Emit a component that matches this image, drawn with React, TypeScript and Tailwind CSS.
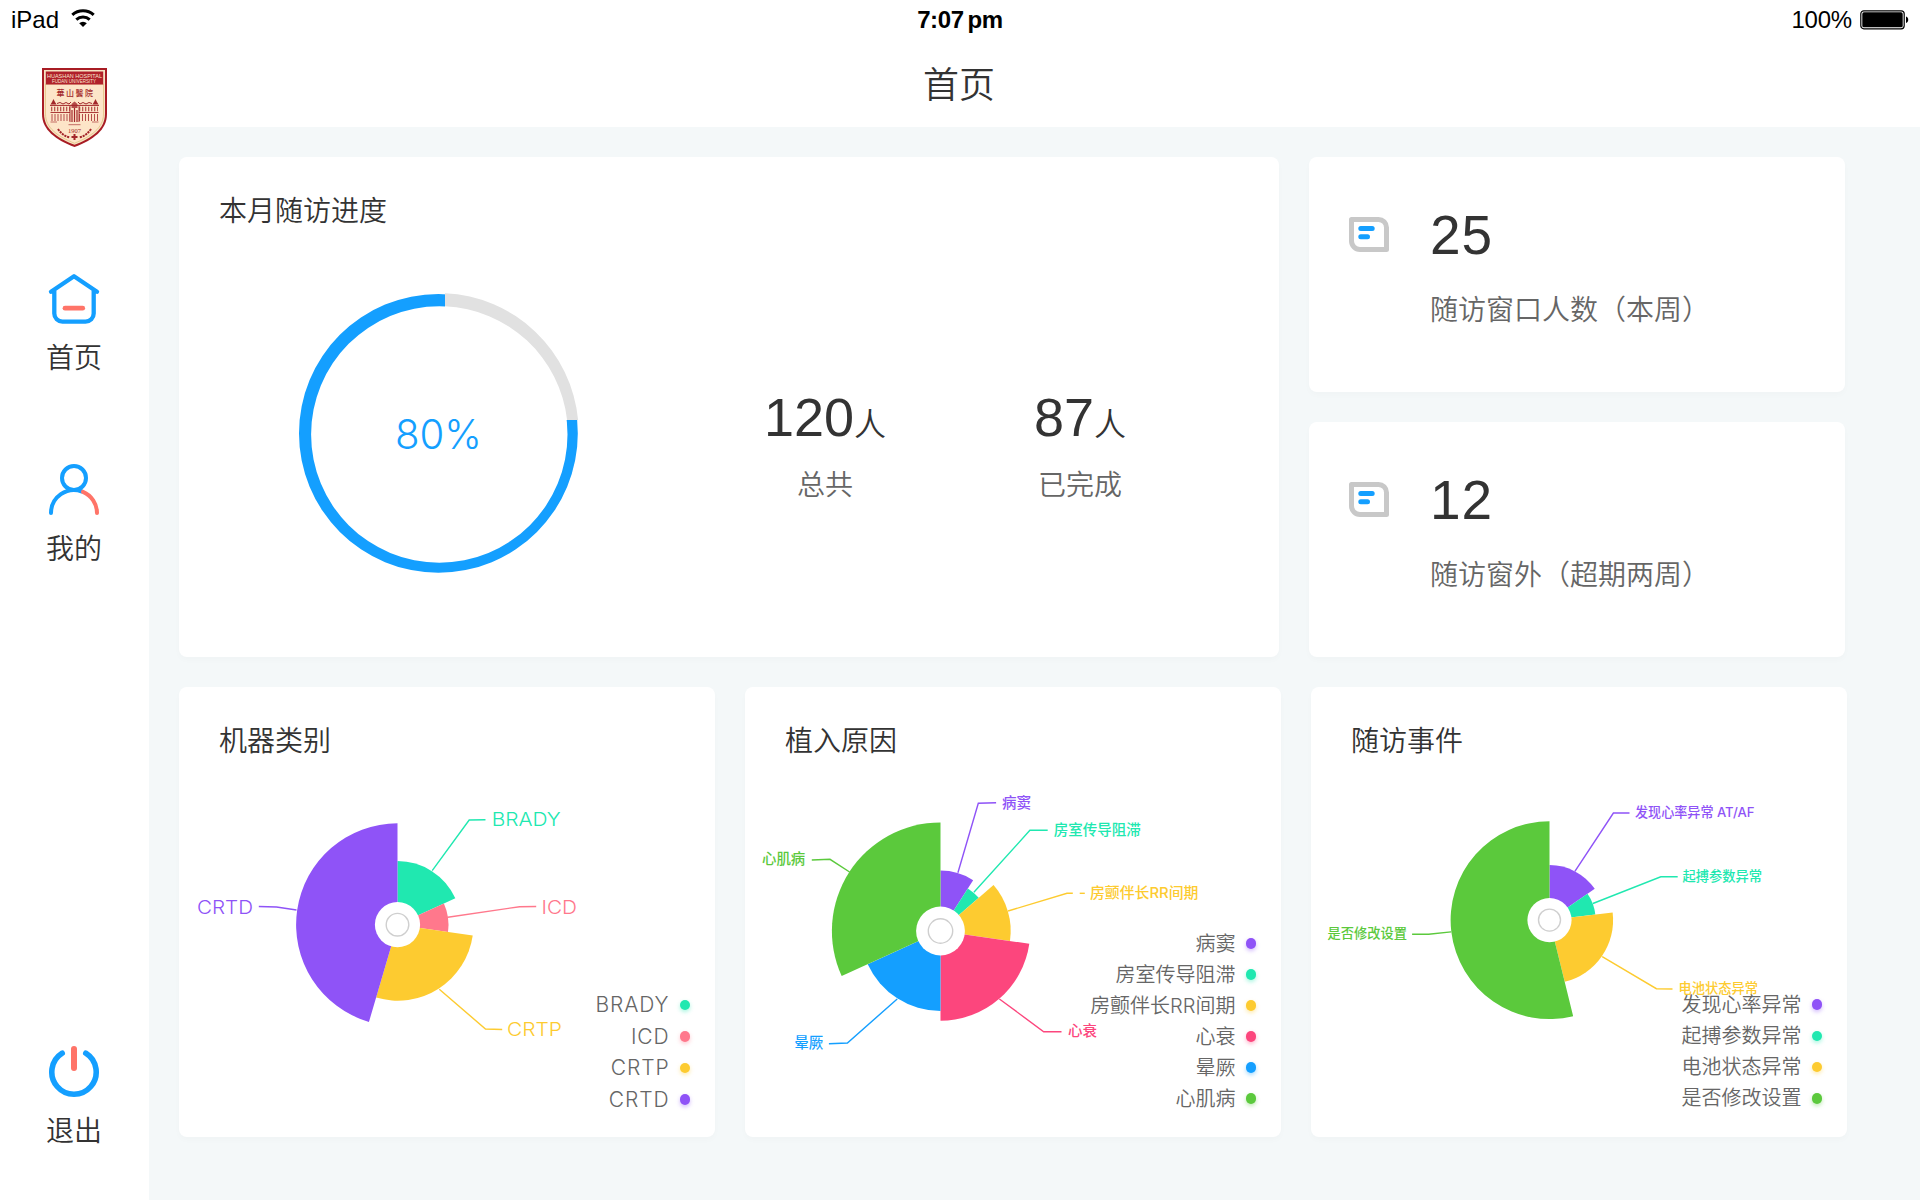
import type { ReactNode } from 'react';

const BLUE = '#149fff';
const RED = '#ff7468';
const PURPLE = '#8f53f7';
const TEAL = '#20e8b0';
const YELLOW = '#fdcb30';
const ROSE = '#ff788c';
const PINK = '#fc467d';
const GREEN = '#5bc93c';

type Slice = { color: string; from: number; to: number; r: number };
type Callout = {
  text: string;
  color: string;
  line: string;
  dash?: string;
  x: number;
  cy: number;
  width: number;
};
type LegendItem = { text: string; color: string };

function point(cx: number, cy: number, r: number, turn: number) {
  const a = turn * 2 * Math.PI;
  return `${(cx + r * Math.sin(a)).toFixed(2)} ${(cy - r * Math.cos(a)).toFixed(2)}`;
}

function wedge(cx: number, cy: number, s: Slice) {
  const large = s.to - s.from > 0.5 ? 1 : 0;
  return `M${cx} ${cy}L${point(cx, cy, s.r, s.from)}A${s.r} ${s.r} 0 ${large} 1 ${point(cx, cy, s.r, s.to)}Z`;
}

function RoseChart(props: {
  cx: number;
  cy: number;
  hole: number;
  ring: number;
  slices: Slice[];
  callouts: Callout[];
  fontSize: number;
  weight: number;
}) {
  const { cx, cy, hole, ring, slices, callouts, fontSize, weight } = props;
  return (
    <svg className="absolute inset-0" width="536" height="450" viewBox="0 0 536 450" fill="none">
      {slices.map((s, i) => (
        <path key={i} d={wedge(cx, cy, s)} fill={s.color} />
      ))}
      <circle cx={cx} cy={cy} r={hole} fill="#fff" />
      <circle cx={cx} cy={cy} r={ring} stroke="#cfcfcf" strokeWidth="1.4" />
      {callouts.map((c) => (
        <g key={c.text}>
          <path d={c.line} stroke={c.color} strokeWidth="1.4" />
          {c.dash && <path d={c.dash} stroke={c.color} strokeWidth="1.4" />}
          <text
            x={c.x}
            y={c.cy + fontSize * 0.37}
            fill={c.color}
            fontSize={fontSize}
            fontWeight={weight}
            textLength={c.width}
            lengthAdjust="spacingAndGlyphs"
          >
            {c.text}
          </text>
        </g>
      ))}
    </svg>
  );
}

function Card({ className, children }: { className: string; children: ReactNode }) {
  return (
    <section className={`relative rounded-lg bg-white shadow-[0_3px_6px_rgba(0,0,0,0.02)] ${className}`}>
      {children}
    </section>
  );
}

function ChartCard(props: { title: string; legend: LegendItem[]; className: string; children: ReactNode }) {
  return (
    <Card className="flex h-[450px] w-[536px] flex-col justify-between">
      {props.children}
      <h2 className="relative pl-10 pt-[38px] text-[28px] font-[350] leading-8 text-[#333]">{props.title}</h2>
      <ul className={`relative flex flex-col items-end pr-[25px] font-[350] leading-none text-[#666] ${props.className}`}>
        {props.legend.map((l) => (
          <li key={l.text} className="flex flex-1 items-center gap-[10px]">
            <span>{l.text}</span>
            <span
              className="size-[10.5px] rounded-full"
              style={{ backgroundColor: l.color, boxShadow: `0 2px 4px ${l.color}66` }}
            />
          </li>
        ))}
      </ul>
    </Card>
  );
}

function Logo() {
  return (
    <svg width="65" height="80" viewBox="0 0 65 80" fill="none" className="ml-px">
      <path d="M0 0H65V46C65 62 51 72 32.500 79C14 72 0 62 0 46Z" fill="#a81c24" />
      <path d="M2 2H63V46C63 61 50 70 32.500 76.800C15 70 2 61 2 46Z" fill="#f6e3c3" />
      <path d="M3.500 16H61.500V46C61.500 60 49 68.500 32.500 75.200C16 68.500 3.500 60 3.500 46Z" fill="#fde5c8" stroke="#e0bd78" strokeWidth=".7" />
      <path d="M3.800 3.500H61.200V16.500H3.800Z" fill="#b0212a" />
      <g fill="#fbe6d0" fontFamily="Liberation Sans">
        <text x="5" y="9.900" fontSize="6" textLength="55" lengthAdjust="spacingAndGlyphs">HUASHAN HOSPITAL</text>
        <text x="10" y="15.200" fontSize="5" textLength="44" lengthAdjust="spacingAndGlyphs">FUDAN UNIVERSITY</text>
      </g>
      <g fill="#a3272a">
        <text x="14.500" y="28" fontSize="8" fontWeight="500" textLength="36.500">華山醫院</text>
        <text x="26" y="64.500" fontSize="5.500" fontFamily="Liberation Serif" textLength="13" lengthAdjust="spacingAndGlyphs">1907</text>
        <path d="M8.500 36.500L10 34L11.500 31L13 34L14.500 36.500ZM50.500 36.500L52 34L53.500 31L55 34L56.500 36.500Z" />
        <path d="M31.500 66H33.500V68H35.500V70H33.500V72H31.500V70H29.500V68H31.500Z" />
        <path d="M29.500 36L32.500 33.500L35.500 36V40H29.500Z" opacity=".8" />
      </g>
      <g stroke="#a3272a">
        <path d="M8 37.400H57M15 35.500L18 34.500L21 36L24 34.500L27 36L29 34M36 34L38 36L41 34.500L44 36L47 34.500L50 35.500" strokeWidth="1" />
        <path d="M9 41H28M37 41H56" strokeWidth="4.500" strokeDasharray="1.300 1.700" opacity=".75" />
        <path d="M8.500 44.500H28M37 44.500H56.500M28 38V54M37 38V54" strokeWidth=".9" />
        <path d="M9.500 49.500H28M37 49.500H56" strokeWidth="7" strokeDasharray="1 2" opacity=".8" />
        <path d="M30 42V54M32.500 40V54M35 42V54" strokeWidth="1.200" />
        <path d="M8.500 54H15M50 54H56.500M26.500 56.700H38.500" strokeWidth=".9" opacity=".7" />
        <path d="M16 61C19 65.500 23 68.500 28 69.500M49 61C46 65.500 42 68.500 37 69.500" strokeWidth="2" strokeDasharray="2.200 .8" />
      </g>
    </svg>
  );
}

function HomeIcon() {
  return (
    <svg width="52" height="52" viewBox="48 273 52 52" fill="none" strokeLinecap="round" strokeLinejoin="round">
      <path d="M51 291.700L74 276.200L97 291.700M54.300 291V313.500a8.200 8.200 0 0 0 8.200 8.200H85.500a8.200 8.200 0 0 0 8.200-8.200V291" stroke={BLUE} strokeWidth="4.300" />
      <path d="M65 308.200H82.700" stroke={RED} strokeWidth="4.800" />
    </svg>
  );
}

function UserIcon() {
  return (
    <svg width="52" height="53" viewBox="48 463 52 53" fill="none" strokeLinecap="round">
      <circle cx="74" cy="478" r="12" stroke={BLUE} strokeWidth="4" />
      <path d="M51 513A23 23 0 0 1 82 491.500" stroke={BLUE} strokeWidth="4" />
      <path d="M83 491.800A23 23 0 0 1 97 513" stroke={RED} strokeWidth="4" />
    </svg>
  );
}

function PowerIcon() {
  return (
    <svg width="52" height="53" viewBox="48 1045 52 53" fill="none" strokeLinecap="round">
      <path d="M62.200 1053.200A22.200 22.200 0 1 0 85.800 1053.200" stroke={BLUE} strokeWidth="5.600" />
      <path d="M74 1049V1068" stroke={RED} strokeWidth="6" />
    </svg>
  );
}

function NoteIcon() {
  return (
    <svg width="40" height="35" viewBox="0 0 40 35" fill="none">
      <path d="M2.500 2.500H29.500a8 8 0 0 1 8 8V32.500H11a8.500 8.500 0 0 1-8.500-8.500Z" stroke="#c8c8c8" strokeWidth="5" strokeLinejoin="round" />
      <path d="M11.800 11.500H23.200M11.800 19.700H18.500" stroke={BLUE} strokeWidth="5" strokeLinecap="round" />
    </svg>
  );
}

function NavItem({ label, icon, className }: { label: string; icon: ReactNode; className: string }) {
  return (
    <a className={`flex w-full flex-col items-center ${className}`}>
      {icon}
      <span className="mt-[17px] text-[28px] font-[350] leading-8 text-[#333]">{label}</span>
    </a>
  );
}

function StatusBar() {
  return (
    <div className="grid h-10 grid-cols-3 items-center font-['Liberation_Sans'] text-[24px] leading-none text-black">
      <div className="flex items-center gap-[12px] pl-[11px]">
        <span>iPad</span>
        <svg width="24" height="19" viewBox="0 0 24 19" fill="none" className="-mt-1">
          <path d="M1.300 5.800A16 16 0 0 1 22.700 5.800" stroke="#000" strokeWidth="3" />
          <path d="M5.300 10.600A10 10 0 0 1 18.700 10.600" stroke="#000" strokeWidth="3" />
          <path d="M12 18L8.200 14.200A5.500 5.500 0 0 1 15.800 14.200Z" fill="#000" />
        </svg>
      </div>
      <div className="text-center text-[24px] font-bold tracking-[-0.4px]">
        7:07<span className="ml-1">pm</span>
      </div>
      <div className="flex items-center justify-end gap-2 pr-[11px]">
        <span className="tracking-[-0.2px]">100%</span>
        <svg width="49" height="20" viewBox="0 0 49 20" fill="none">
          <rect x=".8" y=".8" width="43.400" height="18" rx="3" stroke="#000" strokeWidth="1.200" />
          <rect x="2.300" y="2.300" width="40.400" height="15" rx="1.600" fill="#000" />
          <path d="M46 6.500C49 7.500 49 12 46 13Z" fill="#000" />
        </svg>
      </div>
    </div>
  );
}

function ProgressRing() {
  return (
    <svg width="282" height="282" viewBox="297 292 282 282" className="block">
      <path
        fillRule="evenodd"
        fill={BLUE}
        d="M299 433.400a139.400 139.400 0 1 0 278.800 0a139.400 139.400 0 1 0-278.800 0ZM311.100 434.500a128.200 128.200 0 1 0 256.400 0a128.200 128.200 0 1 0-256.400 0Z"
      />
      <path d="M445 292H579V420H567.500L445 430Z" fill="#fff" />
      <path d="M445 293.200A140 140 0 0 1 578.100 420H567.100A128.400 128.400 0 0 0 445 306.300Z" fill="#e1e1e1" />
      <text x="395" y="448.600" fontSize="40.500" fontWeight="300" fill={BLUE} textLength="87" lengthAdjust="spacingAndGlyphs" fontFamily="Inter">
        80%
      </text>
    </svg>
  );
}

function Stat({ value, label }: { value: string; label: string }) {
  return (
    <div className="flex w-[140px] flex-col items-center">
      <div className="flex items-baseline leading-none text-[#333]">
        <span className="font-['Liberation_Sans'] text-[54px]">{value}</span>
        <span className="text-[32px] font-[350]">人</span>
      </div>
      <span className="mt-[25px] text-[28px] font-[350] leading-8 text-[#666]">{label}</span>
    </div>
  );
}

function WindowCard({ value, label }: { value: string; label: string }) {
  return (
    <Card className="flex h-[235px] w-[536px] items-start gap-[41px] pl-10 pt-[60px]">
      <NoteIcon />
      <div className="-mt-[14px] flex flex-col">
        <span className="font-['Liberation_Sans'] text-[55px] leading-[64px] tracking-[1px] text-[#333]">{value}</span>
        <span className="mt-[27px] text-[28px] font-[350] leading-8 text-[#666]">{label}</span>
      </div>
    </Card>
  );
}

export default function App() {
  return (
    <div className="flex h-[1200px] w-[1920px] flex-col overflow-hidden bg-white font-['Inter','Noto_Sans_CJK_SC',sans-serif]">
      <StatusBar />
      <div className="flex flex-1">
        <nav className="flex w-[149px] flex-col items-center pr-px pt-7">
          <Logo />
          <NavItem className="mt-[125px]" label="首页" icon={<HomeIcon />} />
          <NavItem className="mt-[89px]" label="我的" icon={<UserIcon />} />
          <NavItem className="mt-[480px]" label="退出" icon={<PowerIcon />} />
        </nav>
        <main className="flex flex-1 flex-col">
          <header className="h-[87px] pl-[774px] pt-[23px] text-[36px] leading-[44px] text-[#333]">
            <h1 className="font-[350]">首页</h1>
          </header>
          <div className="flex flex-1 flex-col gap-[30px] bg-[#f4f8f9] pl-[30px] pt-[30px]">
            <div className="flex gap-[30px]">
              <Card className="h-[500px] w-[1100px] pl-10 pt-[38px]">
                <h2 className="text-[28px] font-[350] leading-8 text-[#333]">本月随访进度</h2>
                <div className="flex pl-[78px] pt-[65px]">
                  <ProgressRing />
                  <div className="flex gap-[115px] pl-[176px] pt-[98px]">
                    <Stat value="120" label="总共" />
                    <Stat value="87" label="已完成" />
                  </div>
                </div>
              </Card>
              <div className="flex flex-col gap-[30px]">
                <WindowCard value="25" label="随访窗口人数（本周）" />
                <WindowCard value="12" label="随访窗外（超期两周）" />
              </div>
            </div>
            <div className="flex gap-[30px]">
              <ChartCard
                className="mb-[22px] h-[126px] text-[21px] tracking-[0.9px]"
                title="机器类别"
                legend={[
                  { text: 'BRADY', color: TEAL },
                  { text: 'ICD', color: ROSE },
                  { text: 'CRTP', color: YELLOW },
                  { text: 'CRTD', color: PURPLE },
                ]}
              >
                <RoseChart
                  cx={218.5}
                  cy={237.7}
                  hole={22.6}
                  ring={11.3}
                  fontSize={19}
                  weight={300}
                  slices={[
                    { color: TEAL, from: 0, to: 2 / 11, r: 63.6 },
                    { color: ROSE, from: 2 / 11, to: 3 / 11, r: 51 },
                    { color: YELLOW, from: 3 / 11, to: 6 / 11, r: 76 },
                    { color: PURPLE, from: 6 / 11, to: 1, r: 101.4 },
                  ]}
                  callouts={[
                    { text: 'BRADY', color: TEAL, line: 'M253.200 183.700L290.200 133L306.500 132.700', x: 312.7, cy: 132, width: 69 },
                    { text: 'ICD', color: ROSE, line: 'M268.800 230.300L340.600 219.700L357.200 219.500', x: 362.5, cy: 219.7, width: 35.5 },
                    { text: 'CRTP', color: YELLOW, line: 'M260.300 302.300L306.500 342L323.200 342.500', x: 328, cy: 342, width: 55 },
                    { text: 'CRTD', color: PURPLE, line: 'M117.500 223L97.500 220L79.800 219.500', x: 18, cy: 220, width: 56 },
                  ]}
                />
              </ChartCard>
              <ChartCard
                className="mb-[23px] h-[186px] text-[20px]"
                title="植入原因"
                legend={[
                  { text: '病窦', color: PURPLE },
                  { text: '房室传导阻滞', color: TEAL },
                  { text: '房颤伴长RR间期', color: YELLOW },
                  { text: '心衰', color: PINK },
                  { text: '晕厥', color: BLUE },
                  { text: '心肌病', color: GREEN },
                ]}
              >
                <RoseChart
                  cx={195.5}
                  cy={244}
                  hole={24.4}
                  ring={12.2}
                  fontSize={14.4}
                  weight={500}
                  slices={[
                    { color: PURPLE, from: 0, to: 1 / 11, r: 60.4 },
                    { color: TEAL, from: 1 / 11, to: 1.5 / 11, r: 50.6 },
                    { color: YELLOW, from: 1.5 / 11, to: 3 / 11, r: 70.2 },
                    { color: PINK, from: 3 / 11, to: 0.5, r: 89.7 },
                    { color: BLUE, from: 0.5, to: 7.5 / 11, r: 80 },
                    { color: GREEN, from: 7.5 / 11, to: 1, r: 108.6 },
                  ]}
                  callouts={[
                    { text: '病窦', color: PURPLE, line: 'M212.900 185.700L233.300 116.300L251.100 115.700', x: 257, cy: 115.3, width: 29 },
                    { text: '房室传导阻滞', color: TEAL, line: 'M228.900 205.300L284.900 143.300H302.700', x: 308.7, cy: 142.7, width: 87 },
                    { text: '房颤伴长RR间期', color: YELLOW, line: 'M263.100 224L322 206.300H327.800', dash: 'M334.700 206.300H339.800', x: 345, cy: 205.7, width: 108.5 },
                    { text: '心衰', color: PINK, line: 'M254.400 312L298.700 344.700H316.500', x: 323, cy: 343.7, width: 29 },
                    { text: '晕厥', color: BLUE, line: 'M152.200 312L102.400 356L83.900 356.700', x: 49.3, cy: 355.3, width: 29 },
                    { text: '心肌病', color: GREEN, line: 'M104.600 185L85 172.300L66.800 173', x: 17, cy: 172, width: 43.3 },
                  ]}
                />
              </ChartCard>
              <ChartCard
                className="mb-[23px] h-[125px] text-[20px]"
                title="随访事件"
                legend={[
                  { text: '发现心率异常', color: PURPLE },
                  { text: '起搏参数异常', color: TEAL },
                  { text: '电池状态异常', color: YELLOW },
                  { text: '是否修改设置', color: GREEN },
                ]}
              >
                <RoseChart
                  cx={238.5}
                  cy={233.1}
                  hole={22.1}
                  ring={11}
                  fontSize={13.2}
                  weight={500}
                  slices={[
                    { color: PURPLE, from: 0, to: 2 / 13, r: 55 },
                    { color: TEAL, from: 2 / 13, to: 3 / 13, r: 46.2 },
                    { color: YELLOW, from: 3 / 13, to: 6 / 13, r: 63.6 },
                    { color: GREEN, from: 6 / 13, to: 1, r: 98.9 },
                  ]}
                  callouts={[
                    { text: '发现心率异常 AT/AF', color: PURPLE, line: 'M263.900 184.400L302.400 126H318.500', x: 324, cy: 125.3, width: 119.5 },
                    { text: '起搏参数异常', color: TEAL, line: 'M281.900 216.500L349.800 189.800H366.700', x: 371.5, cy: 189.5, width: 79.5 },
                    { text: '电池状态异常', color: YELLOW, line: 'M291.200 269.600L345.400 301.700L361.500 302', x: 367.5, cy: 301.4, width: 79.5 },
                    { text: '是否修改设置', color: GREEN, line: 'M140.100 244.900L117.600 247.300L101.100 247.200', x: 16.5, cy: 246.3, width: 79.5 },
                  ]}
                />
              </ChartCard>
            </div>
          </div>
        </main>
      </div>
    </div>
  );
}
